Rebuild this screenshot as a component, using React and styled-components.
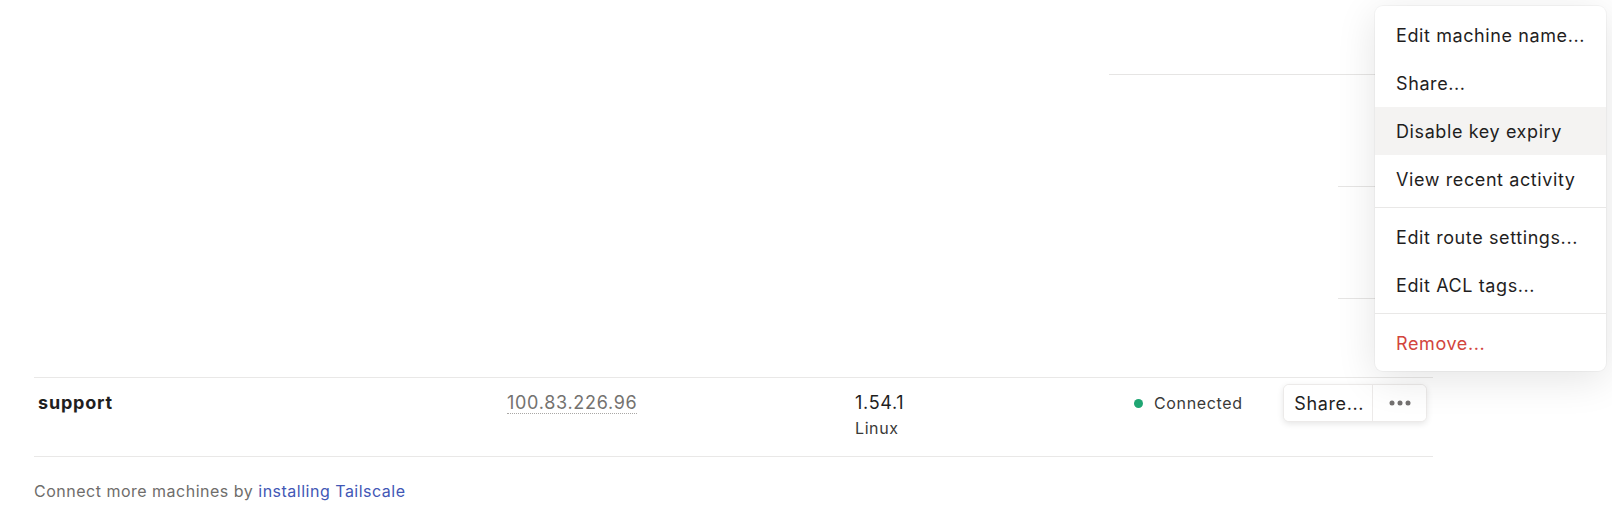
import React from 'react'
import styled, { createGlobalStyle } from 'styled-components';

const GlobalStyle = createGlobalStyle`
    html, body {
        margin: 0;
        padding: 0;
        background: #fff;
    }
    body {
        font-family: Inter, "Noto Sans", "Liberation Sans", sans-serif;
        color: #1f1e1e;
        -webkit-font-smoothing: antialiased;
    }
`;

const Page = styled.div`
    position: relative;
    width: 1612px;
    height: 507px;
    overflow: hidden;
    padding: 74px 179px 0 34px;
    box-sizing: border-box;
`;

const GhostRow = styled.div`
    height: ${(p) => p.h}px;
    box-sizing: border-box;
    border-top: 1px solid transparent;
    border-image: linear-gradient(
        to right,
        #ecebea 0 1px,
        #ffffff 1px calc(100% - ${(p) => p.visible}px),
        #e6e5e4 calc(100% - ${(p) => p.visible}px)
    ) 1;
`;

const MachineRow = styled.div`
    display: grid;
    grid-template-columns: 469px 348px 279px 1fr;
    align-items: start;
    height: 80px;
    box-sizing: border-box;
    border-top: 1px solid #e9e8e7;
    border-bottom: 1px solid #e9e8e7;
    padding: 13px 6px 0 4px;
`;

const Name = styled.div`
    font-size: 18px;
    font-weight: 700;
    line-height: 24px;
    letter-spacing: 0.8px;
`;

const Address = styled.span`
    display: inline-block;
    font-size: 18px;
    line-height: 21px;
    margin-top: 1px;
    letter-spacing: 0.7px;
    color: #74726f;
    border-bottom: 1px dotted #a9a7a5;
`;

const Version = styled.div`
    display: flex;
    flex-direction: column;
    gap: 3px;
`;

const VersionNumber = styled.span`
    font-size: 18px;
    line-height: 23px;
    letter-spacing: 0.7px;
`;

const OsName = styled.span`
    font-size: 16px;
    line-height: 22px;
    letter-spacing: 0.6px;
    color: #3a3938;
`;

const ActionCell = styled.div`
    display: flex;
    align-items: flex-start;
    justify-content: space-between;
`;

const Status = styled.div`
    display: flex;
    align-items: center;
    gap: 11px;
    font-size: 16px;
    line-height: 24px;
    letter-spacing: 0.65px;
    color: #3a3938;
`;

const Dot = styled.span`
    width: 9px;
    height: 9px;
    border-radius: 50%;
    background: #1fa673;
`;

const ButtonGroup = styled.div`
    display: flex;
    height: 36px;
    margin-top: -7px;
    border: 1px solid #eceae9;
    border-radius: 6px;
    box-shadow: 0 2px 6px rgba(0, 0, 0, 0.1);
    background: #fff;
    overflow: hidden;
`;

const GroupButton = styled.button`
    display: flex;
    align-items: center;
    justify-content: center;
    border: none;
    background: #fff;
    font-family: inherit;
    font-size: 18px;
    letter-spacing: 0.6px;
    color: #1f1e1e;
    padding: ${(p) => (p.icon ? '0 15px 0 16px' : '0 8px 0 10px')};
    border-left: ${(p) => (p.icon ? '1px solid #eceae9' : 'none')};
    cursor: pointer;
`;

const Footer = styled.p`
    margin: 22px 0 0;
    font-size: 16px;
    line-height: 24px;
    letter-spacing: 0.5px;
    color: #6f6d6b;
`;

const Link = styled.a`
    color: #4257b5;
    text-decoration: none;
`;

const Menu = styled.div`
    position: absolute;
    top: 6px;
    right: 6px;
    width: 231px;
    box-sizing: border-box;
    padding: 5px 0 4px;
    background: #fff;
    border-radius: 8px;
    box-shadow: 0 8px 40px rgba(0, 0, 0, 0.11), 0 0 0 1px rgba(0, 0, 0, 0.03);
`;

const MenuItem = styled.div`
    height: 48px;
    display: flex;
    align-items: center;
    padding-left: 21px;
    font-size: 18px;
    letter-spacing: 0.6px;
    color: ${(p) => (p.danger ? '#d2453d' : '#1f1e1e')};
    background: ${(p) => (p.active ? '#f4f3f2' : 'transparent')};
    white-space: nowrap;
`;

const Separator = styled.div`
    height: 1px;
    margin: 4px 0 5px;
    background: #e9e8e7;
`;

const MoreIcon = () => (
    <svg width="22" height="6" viewBox="0 0 22 6">
        <circle cx="3" cy="3" r="2.5" fill="#737170" />
        <circle cx="11" cy="3" r="2.5" fill="#737170" />
        <circle cx="19" cy="3" r="2.5" fill="#737170" />
    </svg>
);

const App = () => {
  return (
    <Page>
        <GlobalStyle />
        <GhostRow h={112} visible={325} />
        <GhostRow h={112} visible={96} />
        <GhostRow h={79} visible={96} />
        <MachineRow>
            <Name>support</Name>
            <div><Address>100.83.226.96</Address></div>
            <Version>
                <VersionNumber>1.54.1</VersionNumber>
                <OsName>Linux</OsName>
            </Version>
            <ActionCell>
                <Status><Dot />Connected</Status>
                <ButtonGroup>
                    <GroupButton>Share...</GroupButton>
                    <GroupButton icon><MoreIcon /></GroupButton>
                </ButtonGroup>
            </ActionCell>
        </MachineRow>
        <Footer>
            Connect more machines by <Link href="#">installing Tailscale</Link>
        </Footer>
        <Menu>
            <MenuItem>Edit machine name...</MenuItem>
            <MenuItem>Share...</MenuItem>
            <MenuItem active>Disable key expiry</MenuItem>
            <MenuItem>View recent activity</MenuItem>
            <Separator />
            <MenuItem>Edit route settings...</MenuItem>
            <MenuItem>Edit ACL tags...</MenuItem>
            <Separator />
            <MenuItem danger>Remove...</MenuItem>
        </Menu>
    </Page>
  )
}

export default App
